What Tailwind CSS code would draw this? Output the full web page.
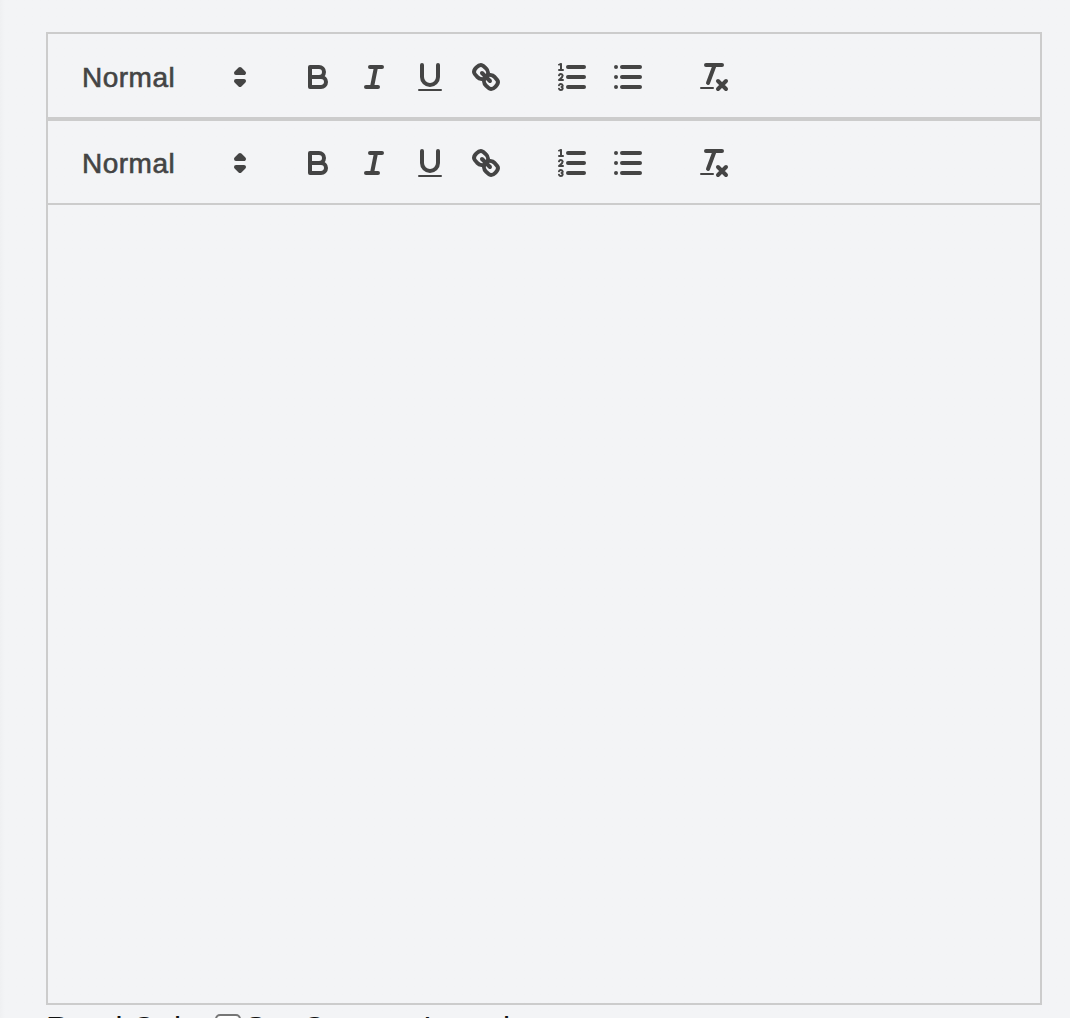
<!DOCTYPE html>
<html lang="en"><head><meta charset="utf-8"><title>Editor</title>
<script src="https://cdn.jsdelivr.net/npm/@tailwindcss/browser@4"></script></head>
<body class="h-[1018px] overflow-hidden bg-[#f3f4f6] bg-linear-to-r from-[#eff0f2] to-[#f3f4f6] to-[5px] pt-8 pl-[46px] font-['Helvetica_Neue','Liberation_Sans',sans-serif]">
<svg class="hidden" fill="none" stroke-linecap="round" stroke-linejoin="round">
<symbol id="picker" viewBox="0 0 18 18"><path fill="#444" d="M7 11L9 13L11 11ZM7 7L9 5L11 7Z"/></symbol>
<symbol id="bold" viewBox="0 0 18 18"><path d="M5,4H9.5A2.5,2.5,0,0,1,12,6.5v0A2.5,2.5,0,0,1,9.5,9H5V4Z"/><path d="M5,9h5.5A2.5,2.5,0,0,1,13,11.5v0A2.5,2.5,0,0,1,10.5,14H5V9Z"/></symbol>
<symbol id="italic" viewBox="0 0 18 18"><path d="M7 4H13M5 14H11M8 14L10 4"/></symbol>
<symbol id="underline" viewBox="0 0 18 18"><path d="M5,3V9a4.012,4.012,0,0,0,4,4H9a4.012,4.012,0,0,0,4-4V3"/><rect x="3" y="15" width="12" height="1" rx=".5" fill="#444" stroke="none"/></symbol>
<symbol id="link" viewBox="0 0 18 18"><path d="M7 7L11 11"/><path d="M8.9,4.577a3.476,3.476,0,0,1,.36,4.679A3.476,3.476,0,0,1,4.577,8.9C3.185,7.5,2.035,6.4,4.217,4.217S7.5,3.185,8.9,4.577Z"/><path d="M13.423,9.1a3.476,3.476,0,0,0-4.679-.36,3.476,3.476,0,0,0,.36,4.679c1.392,1.392,2.5,2.542,4.679.36S14.815,10.5,13.423,9.1Z"/></symbol>
<symbol id="ordered" viewBox="0 0 18 18"><path d="M7 4H15M7 9H15M7 14H15"/><path stroke-width="1" d="M2.5 5.5H4.5"/><path fill="#444" stroke="none" d="M3.5,6A0.5,0.5,0,0,1,3,5.5V3.085l-0.276.138A0.5,0.5,0,0,1,2.053,3c-0.124-.247-0.023-0.324.224-0.447l1-.5A0.5,0.5,0,0,1,4,2.5v3A0.5,0.5,0,0,1,3.5,6Z"/><path stroke-width="1" d="M4.5,10.5h-2c0-.234,1.85-1.076,1.85-2.234A0.959,0.959,0,0,0,2.5,8.156"/><path stroke-width="1" d="M2.5,14.846a0.959,0.959,0,0,0,1.85-.109A0.7,0.7,0,0,0,3.75,14a0.688,0.688,0,0,0,.6-0.736,0.959,0.959,0,0,0-1.85-.109"/></symbol>
<symbol id="bullet" viewBox="0 0 18 18"><path d="M6 4H15M6 9H15M6 14H15M3 4H3M3 9H3M3 14H3"/></symbol>
<symbol id="clean" viewBox="0 0 18 18"><path d="M5 3H13M6 12L9.35 3M11 11L15 15M15 11L11 15"/><rect x="2" y="14" width="7" height="1" rx=".5" fill="#444" stroke="none"/></symbol>
</svg>
<main class="w-[996px]">
<div class="flex h-[87px] items-center border-2 border-[#ccc] pt-[3px] pl-[34px] text-[#444]">
<div class="flex w-[176px] items-center justify-between text-[28px] leading-[46px] font-medium tracking-[0.5px] [-webkit-text-stroke:0.6px_#444]"><span class="pt-[2px]">Normal</span><svg class="size-9 fill-none stroke-[#444] stroke-2 [stroke-linecap:round] [stroke-linejoin:round]"><use href="#picker"/></svg></div>
<div class="ml-[42px] flex gap-5 fill-none stroke-[#444] stroke-2 [stroke-linecap:round] [stroke-linejoin:round]"><svg class="size-9"><use href="#bold"/></svg><svg class="size-9"><use href="#italic"/></svg><svg class="size-9"><use href="#underline"/></svg><svg class="size-9"><use href="#link"/></svg></div>
<div class="ml-[50px] flex gap-5 fill-none stroke-[#444] stroke-2 [stroke-linecap:round] [stroke-linejoin:round]"><svg class="size-9"><use href="#ordered"/></svg><svg class="size-9"><use href="#bullet"/></svg></div>
<svg class="ml-[50px] size-9 fill-none stroke-[#444] stroke-2 [stroke-linecap:round] [stroke-linejoin:round]"><use href="#clean"/></svg>
</div>
<div class="flex h-[86px] items-center border-2 border-[#ccc] pt-[2px] pl-[34px] text-[#444]">
<div class="flex w-[176px] items-center justify-between text-[28px] leading-[46px] font-medium tracking-[0.5px] [-webkit-text-stroke:0.6px_#444]"><span class="pt-[2px]">Normal</span><svg class="size-9 fill-none stroke-[#444] stroke-2 [stroke-linecap:round] [stroke-linejoin:round]"><use href="#picker"/></svg></div>
<div class="ml-[42px] flex gap-5 fill-none stroke-[#444] stroke-2 [stroke-linecap:round] [stroke-linejoin:round]"><svg class="size-9"><use href="#bold"/></svg><svg class="size-9"><use href="#italic"/></svg><svg class="size-9"><use href="#underline"/></svg><svg class="size-9"><use href="#link"/></svg></div>
<div class="ml-[50px] flex gap-5 fill-none stroke-[#444] stroke-2 [stroke-linecap:round] [stroke-linejoin:round]"><svg class="size-9"><use href="#ordered"/></svg><svg class="size-9"><use href="#bullet"/></svg></div>
<svg class="ml-[50px] size-9 fill-none stroke-[#444] stroke-2 [stroke-linecap:round] [stroke-linejoin:round]"><use href="#clean"/></svg>
</div>
<div class="h-[800px] border-2 border-t-0 border-[#ccc]"></div>
<div class="-mt-px flex h-12 items-start text-[32px] leading-[48px] text-[#111]"><span class="w-[169px]">Read Only</span><span class="mt-[10px] size-[26px] rounded-[5px] border-2 border-[#767676] bg-white"></span><span class="ml-1">Set Content Insertion</span></div>
</main>
</body></html>
